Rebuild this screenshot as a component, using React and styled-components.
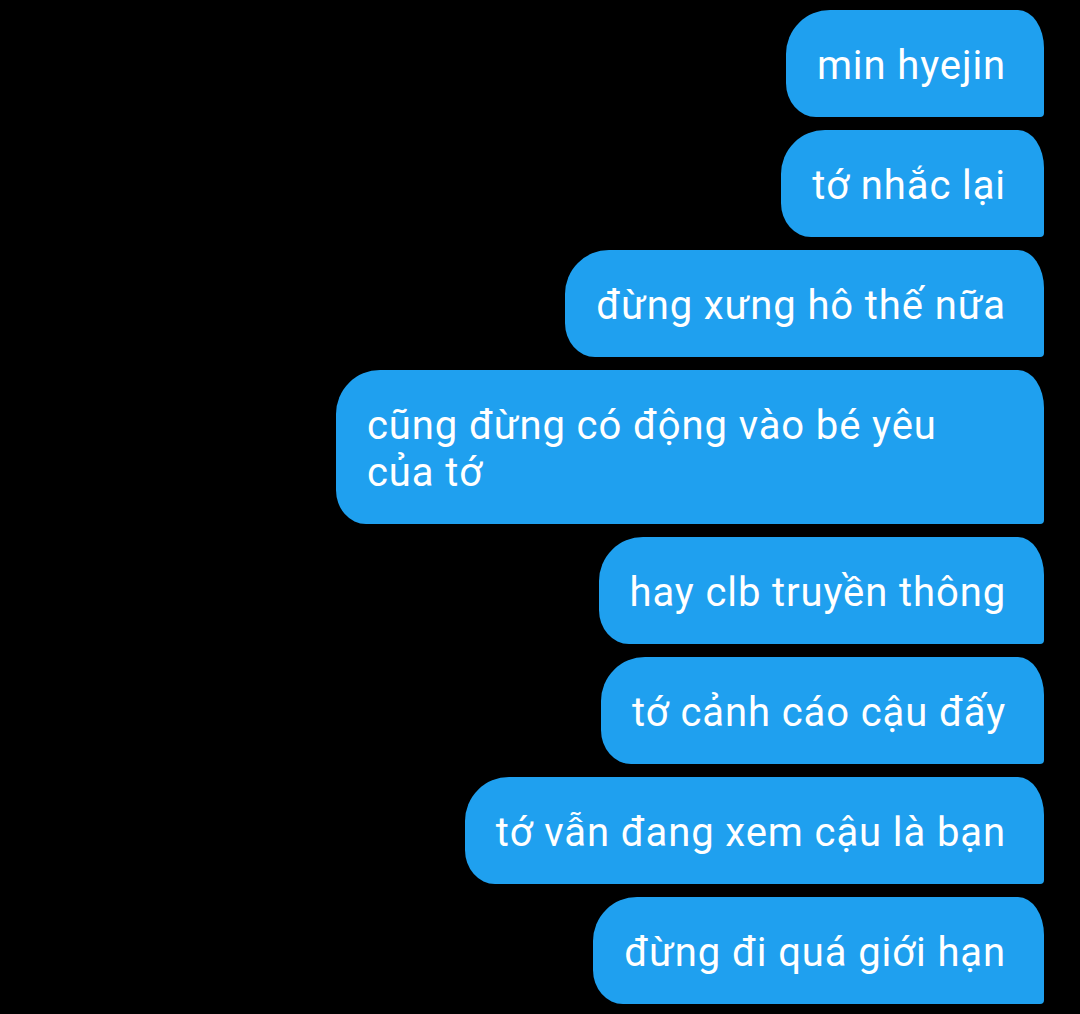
import styled, { createGlobalStyle } from "styled-components";

const messages = [
  "min hyejin",
  "tớ nhắc lại",
  "đừng xưng hô thế nữa",
  "cũng đừng có động vào bé yêu của tớ",
  "hay clb truyền thông",
  "tớ cảnh cáo cậu đấy",
  "tớ vẫn đang xem cậu là bạn",
  "đừng đi quá giới hạn",
];

const GlobalStyle = createGlobalStyle`
  html, body {
    margin: 0;
    padding: 0;
    background: #000;
    overflow: hidden;
  }
  body {
    font-family: Roboto, "Noto Sans", "Liberation Sans", sans-serif;
  }
`;

const Screen = styled.main`
  width: 100vw;
  height: 1014px;
  background: #000;
  overflow: hidden;
`;

const Thread = styled.section`
  box-sizing: border-box;
  padding: 10px 36px 9px 0;

  display: flex;
  flex-direction: column;
  align-items: flex-end;
  gap: 13px;
`;

const Bubble = styled.div`
  box-sizing: border-box;
  max-width: 708px;
  padding: 32px 38px 28px 31px;

  background: #1fa0ef;
  color: #fff;
  border-radius: 44px 26px 4px 30px / 44px 38px 4px 34px;

  font-size: 40px;
  line-height: 47px;
  letter-spacing: 0.9px;
`;

export default function App() {
  return (
    <Screen>
      <GlobalStyle />
      <Thread>
        {messages.map((text, i) => (
          <Bubble key={i}>{text}</Bubble>
        ))}
      </Thread>
    </Screen>
  );
}
